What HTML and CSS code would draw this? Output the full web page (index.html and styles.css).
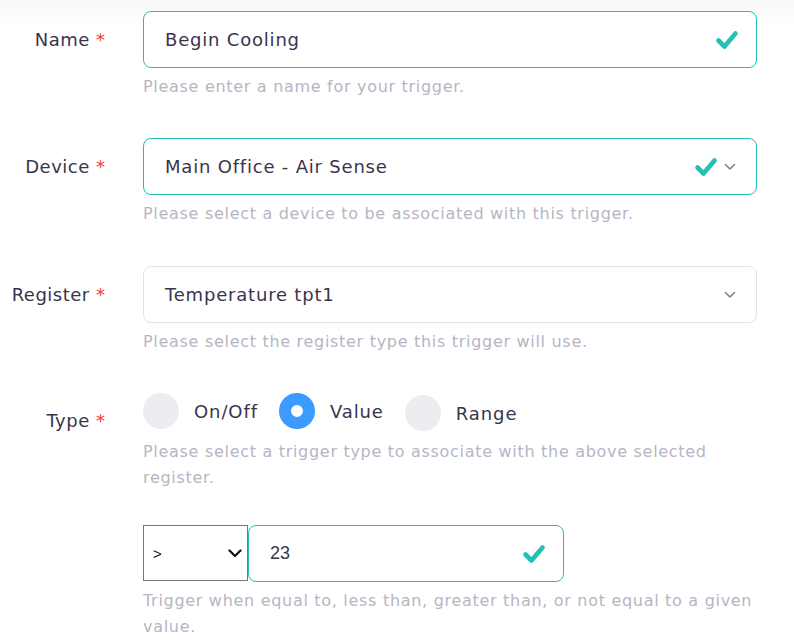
FILE: index.html
```html
<!DOCTYPE html>
<html>
<head>
<meta charset="utf-8">
<link rel="stylesheet" href="styles.css">
</head>
<body>
<form class="form">
  <div class="row row-name">
    <label class="label">Name <span class="req">*</span></label>
    <div class="field">
      <div class="control valid solo">
        <span class="value">Begin Cooling</span>
        <span class="icons">
          <svg class="check" viewBox="0 0 24 20" width="24" height="20"><path d="M3.5 10.5 L9.5 16.5 L20.5 3.5" fill="none" stroke="#22c1b3" stroke-width="4.6" stroke-linecap="round" stroke-linejoin="round"/></svg>
        </span>
      </div>
      <p class="help">Please enter a name for your trigger.</p>
    </div>
  </div>

  <div class="row row-device">
    <label class="label">Device <span class="req">*</span></label>
    <div class="field">
      <div class="control valid">
        <span class="value">Main Office - Air Sense</span>
        <span class="icons">
          <svg class="check" viewBox="0 0 24 20" width="24" height="20"><path d="M3.5 10.5 L9.5 16.5 L20.5 3.5" fill="none" stroke="#22c1b3" stroke-width="4.6" stroke-linecap="round" stroke-linejoin="round"/></svg>
          <svg class="chev" viewBox="0 0 12 8" width="12" height="8"><path d="M1.5 1.5 L6 6 L10.5 1.5" fill="none" stroke="#857d95" stroke-width="1.6" stroke-linecap="round" stroke-linejoin="round"/></svg>
        </span>
      </div>
      <p class="help">Please select a device to be associated with this trigger.</p>
    </div>
  </div>

  <div class="row row-register">
    <label class="label">Register <span class="req">*</span></label>
    <div class="field">
      <div class="control">
        <span class="value">Temperature tpt1</span>
        <span class="icons">
          <svg class="chev" viewBox="0 0 12 8" width="12" height="8"><path d="M1.5 1.5 L6 6 L10.5 1.5" fill="none" stroke="#857d95" stroke-width="1.6" stroke-linecap="round" stroke-linejoin="round"/></svg>
        </span>
      </div>
      <p class="help">Please select the register type this trigger will use.</p>
    </div>
  </div>

  <div class="row row-type">
    <label class="label label-type">Type <span class="req">*</span></label>
    <div class="field">
      <div class="radios">
        <span class="radio"><span class="dot"></span><span class="rlabel">On/Off</span></span>
        <span class="radio checked"><span class="dot"></span><span class="rlabel">Value</span></span>
        <span class="radio low"><span class="dot"></span><span class="rlabel">Range</span></span>
      </div>
      <p class="help help-type">Please select a trigger type to associate with the above selected<br>register.</p>
    </div>
  </div>

  <div class="row row-value">
    <div class="label"></div>
    <div class="field">
      <div class="pair">
        <div class="op">
          <span>&gt;</span>
          <svg viewBox="0 0 14 9" width="14" height="9"><path d="M1.5 1.5 L7 7 L12.5 1.5" fill="none" stroke="#111" stroke-width="2.2" stroke-linecap="round" stroke-linejoin="round"/></svg>
        </div>
        <div class="control valid num solo">
          <span class="value num-value">23</span>
          <span class="icons">
            <svg class="check" viewBox="0 0 24 20" width="24" height="20"><path d="M3.5 10.5 L9.5 16.5 L20.5 3.5" fill="none" stroke="#22c1b3" stroke-width="4.6" stroke-linecap="round" stroke-linejoin="round"/></svg>
          </span>
        </div>
      </div>
      <p class="help help-value">Trigger when equal to, less than, greater than, or not equal to a given<br>value.</p>
    </div>
  </div>
</form>
</body>
</html>
```

FILE: styles.css
```css
* { box-sizing: border-box; }
html, body { margin: 0; padding: 0; }
body {
  background: linear-gradient(to bottom, #f7f7f7 0px, #ffffff 26px);
  font-family: "DejaVu Sans", "Open Sans", sans-serif;
  color: #352f4a;
  width: 794px;
  height: 644px;
  overflow: hidden;
}
.form {
  padding-top: 11px;
}
.row {
  display: grid;
  grid-template-columns: 105px 614px;
  column-gap: 38px;
}
.row-name { margin-bottom: 38px; }
.row-device { margin-bottom: 39px; }
.row-register { margin-bottom: 38px; }
.row-type { margin-bottom: 34px; }
.label {
  text-align: right;
  font-size: 18px;
  letter-spacing: 0.5px;
  line-height: 57px;
  height: 57px;
  color: #3a344d;
  white-space: nowrap;
}
.req { color: #f1412c; letter-spacing: 0; }
.field { display: flex; flex-direction: column; }
.control {
  height: 57px;
  border: 1px solid #e3e2ea;
  border-radius: 8px;
  background: #fff;
  display: flex;
  align-items: center;
  justify-content: space-between;
  padding: 0 20px 0 21px;
}
.control.valid { border-color: #1fbfb4; }
.control.solo { padding-right: 17px; }
.value { font-size: 18px; letter-spacing: 0.8px; color: #3a344d; }
.icons { display: flex; align-items: center; gap: 6px; }
.check { display: block; }
.chev { display: block; }
.help {
  margin: 6px 0 0;
  font-size: 16px;
  letter-spacing: 0.7px;
  line-height: 26px;
  color: #b7b5c4;
}
.label-type { line-height: 20px; height: auto; padding-top: 18px; }
.radios {
  display: flex;
  align-items: flex-start;
  height: 36px;
}
.radio { display: flex; align-items: center; margin-right: 21px; }
.radio.low { margin-top: 2px; }
.dot {
  width: 36px; height: 36px; border-radius: 50%;
  background: #ececf1;
  margin-right: 15px;
}
.radio.checked .dot {
  background: #ffffff;
  border: 12px solid #3c9bff;
}
.rlabel { font-size: 18px; letter-spacing: 0.9px; color: #3a344d; }
.help-type { margin-top: 10px; }
.pair { display: flex; height: 56px; }
.op {
  width: 105px;
  border: 1px solid #767676;
  display: flex; align-items: center; justify-content: space-between;
  padding: 0 5px 0 9px;
  font-family: "Liberation Sans", sans-serif;
  font-size: 15px; color: #111;
}
.num { width: 316px; height: 57px; padding-left: 21px; }
.num-value { font-family: "Liberation Sans", sans-serif; font-size: 18px; letter-spacing: 0; }
.help-value { margin-top: 7px; }
```
